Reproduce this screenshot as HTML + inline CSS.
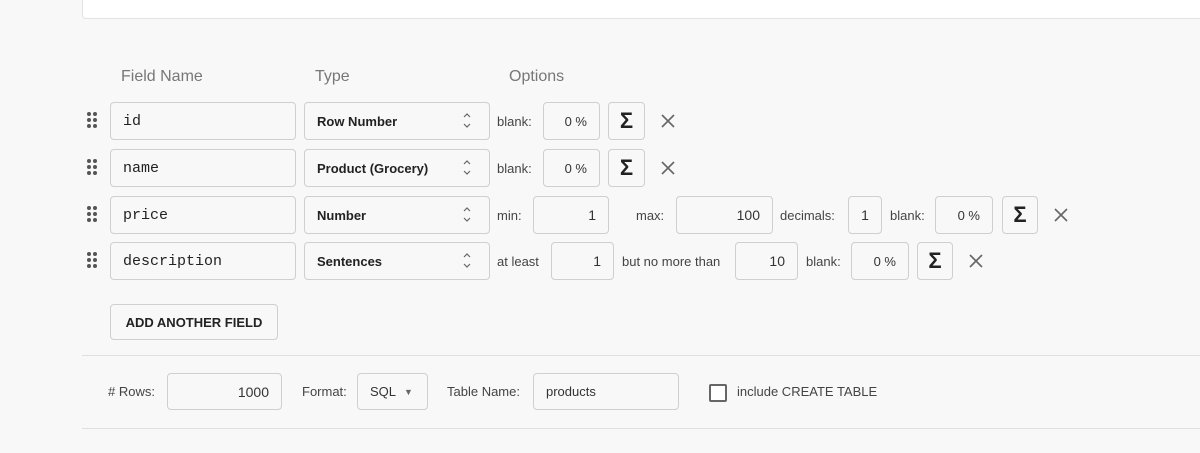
<!DOCTYPE html>
<html><head><style>
body{margin:0;width:1200px;height:453px;background:#f8f8f8;font-family:"Liberation Sans",sans-serif;position:relative;overflow:hidden;color:#333}
.a{position:absolute}
.box{position:absolute;background:#f8f8f8;border:1px solid #cfcfcf;border-radius:4px;box-sizing:border-box}
.in{display:flex;align-items:center;font-size:14px;color:#333;padding:0 12px}
.mono{font-family:"Liberation Mono",monospace;font-size:15px;color:#222}
.r{justify-content:flex-end}
.sel{font-weight:bold;font-size:13px;color:#222}
.lbl{position:absolute;font-size:13px;color:#444}
.hd{position:absolute;font-size:16px;color:#777;top:68px}
.sig{display:flex;align-items:center;justify-content:center;font-weight:bold;font-size:22px;color:#222}
.x{position:absolute;width:14px;height:14px}
.dots{position:absolute;width:10px;height:18px}
.dots i{position:absolute;width:4px;height:4px;border-radius:50%;background:#555}
</style></head><body>
<div class="a" style="left:82px;top:-5px;width:1130px;height:22px;background:#fff;border:1px solid #e2e2e2;border-radius:4px"></div>
<div class="hd" style="left:121px">Field Name</div>
<div class="hd" style="left:315px">Type</div>
<div class="hd" style="left:509px">Options</div>

<div class="dots" style="left:87px;top:112px"><i style="left:0;top:0"></i><i style="left:6px;top:0"></i><i style="left:0;top:6px"></i><i style="left:6px;top:6px"></i><i style="left:0;top:12px"></i><i style="left:6px;top:12px"></i></div>
<div class="dots" style="left:87px;top:159px"><i style="left:0;top:0"></i><i style="left:6px;top:0"></i><i style="left:0;top:6px"></i><i style="left:6px;top:6px"></i><i style="left:0;top:12px"></i><i style="left:6px;top:12px"></i></div>
<div class="dots" style="left:87px;top:206px"><i style="left:0;top:0"></i><i style="left:6px;top:0"></i><i style="left:0;top:6px"></i><i style="left:6px;top:6px"></i><i style="left:0;top:12px"></i><i style="left:6px;top:12px"></i></div>
<div class="dots" style="left:87px;top:252px"><i style="left:0;top:0"></i><i style="left:6px;top:0"></i><i style="left:0;top:6px"></i><i style="left:6px;top:6px"></i><i style="left:0;top:12px"></i><i style="left:6px;top:12px"></i></div>

<div class="box in mono" style="left:110px;top:102px;width:186px;height:38px">id</div>
<div class="box in mono" style="left:110px;top:149px;width:186px;height:38px">name</div>
<div class="box in mono" style="left:110px;top:196px;width:186px;height:38px">price</div>
<div class="box in mono" style="left:110px;top:242px;width:186px;height:38px">description</div>

<div class="box in sel" style="left:304px;top:102px;width:186px;height:38px">Row Number</div>
<div class="box in sel" style="left:304px;top:149px;width:186px;height:38px">Product (Grocery)</div>
<div class="box in sel" style="left:304px;top:196px;width:186px;height:38px">Number</div>
<div class="box in sel" style="left:304px;top:242px;width:186px;height:38px">Sentences</div>
<svg class="a" style="left:462px;top:112px" width="10" height="215"><g fill="none" stroke="#666" stroke-width="1.2"><path d="M2 5l3-3 3 3M2 12l3 3 3-3"/><path transform="translate(0,47)" d="M2 5l3-3 3 3M2 12l3 3 3-3"/><path transform="translate(0,94)" d="M2 5l3-3 3 3M2 12l3 3 3-3"/><path transform="translate(0,140)" d="M2 5l3-3 3 3M2 12l3 3 3-3"/></g></svg>

<div class="lbl" style="left:497px;top:114px">blank:</div>
<div class="box in r" style="left:543px;top:102px;width:57px;height:38px;font-size:13px">0 %</div>
<div class="box sig" style="left:608px;top:102px;width:37px;height:38px">Σ</div>
<svg class="x" style="left:661px;top:114px"><path d="M1 1L13 13M13 1L1 13" stroke="#666" stroke-width="1.6"/></svg>

<div class="lbl" style="left:497px;top:161px">blank:</div>
<div class="box in r" style="left:543px;top:149px;width:57px;height:38px;font-size:13px">0 %</div>
<div class="box sig" style="left:608px;top:149px;width:37px;height:38px">Σ</div>
<svg class="x" style="left:661px;top:161px"><path d="M1 1L13 13M13 1L1 13" stroke="#666" stroke-width="1.6"/></svg>

<div class="lbl" style="left:497px;top:208px">min:</div>
<div class="box in r" style="left:533px;top:196px;width:76px;height:38px">1</div>
<div class="lbl" style="left:636px;top:208px">max:</div>
<div class="box in r" style="left:676px;top:196px;width:97px;height:38px">100</div>
<div class="lbl" style="left:780px;top:208px">decimals:</div>
<div class="box in" style="left:848px;top:196px;width:34px;height:38px;justify-content:center;padding:0">1</div>
<div class="lbl" style="left:890px;top:208px">blank:</div>
<div class="box in r" style="left:935px;top:196px;width:58px;height:38px;font-size:13px">0 %</div>
<div class="box sig" style="left:1002px;top:196px;width:36px;height:38px">Σ</div>
<svg class="x" style="left:1054px;top:208px"><path d="M1 1L13 13M13 1L1 13" stroke="#666" stroke-width="1.6"/></svg>

<div class="lbl" style="left:497px;top:254px">at least</div>
<div class="box in r" style="left:551px;top:242px;width:63px;height:38px">1</div>
<div class="lbl" style="left:622px;top:254px">but no more than</div>
<div class="box in r" style="left:735px;top:242px;width:63px;height:38px">10</div>
<div class="lbl" style="left:806px;top:254px">blank:</div>
<div class="box in r" style="left:851px;top:242px;width:58px;height:38px;font-size:13px">0 %</div>
<div class="box sig" style="left:917px;top:242px;width:36px;height:38px">Σ</div>
<svg class="x" style="left:969px;top:254px"><path d="M1 1L13 13M13 1L1 13" stroke="#666" stroke-width="1.6"/></svg>

<div class="box" style="left:110px;top:304px;width:168px;height:36px;display:flex;align-items:center;justify-content:center;font-size:13px;font-weight:bold;color:#222">ADD ANOTHER FIELD</div>
<div class="a" style="left:82px;top:355px;width:1130px;height:1px;background:#e0e0e0"></div>

<div class="lbl" style="left:108px;top:384px">&#35; Rows:</div>
<div class="box in r" style="left:167px;top:373px;width:115px;height:37px">1000</div>
<div class="lbl" style="left:302px;top:384px">Format:</div>
<div class="box in" style="left:357px;top:373px;width:71px;height:37px;font-size:13px">SQL <span style="font-size:9px;color:#666;margin-left:8px">▼</span></div>
<div class="lbl" style="left:447px;top:384px">Table Name:</div>
<div class="box in" style="left:533px;top:373px;width:146px;height:37px;font-size:13px">products</div>
<div class="a" style="left:709px;top:384px;width:14px;height:14px;border:2px solid #666;border-radius:2px;background:#fff"></div>
<div class="lbl" style="left:737px;top:384px">include CREATE TABLE</div>
<div class="a" style="left:82px;top:428px;width:1130px;height:1px;background:#e0e0e0"></div>
</body></html>
